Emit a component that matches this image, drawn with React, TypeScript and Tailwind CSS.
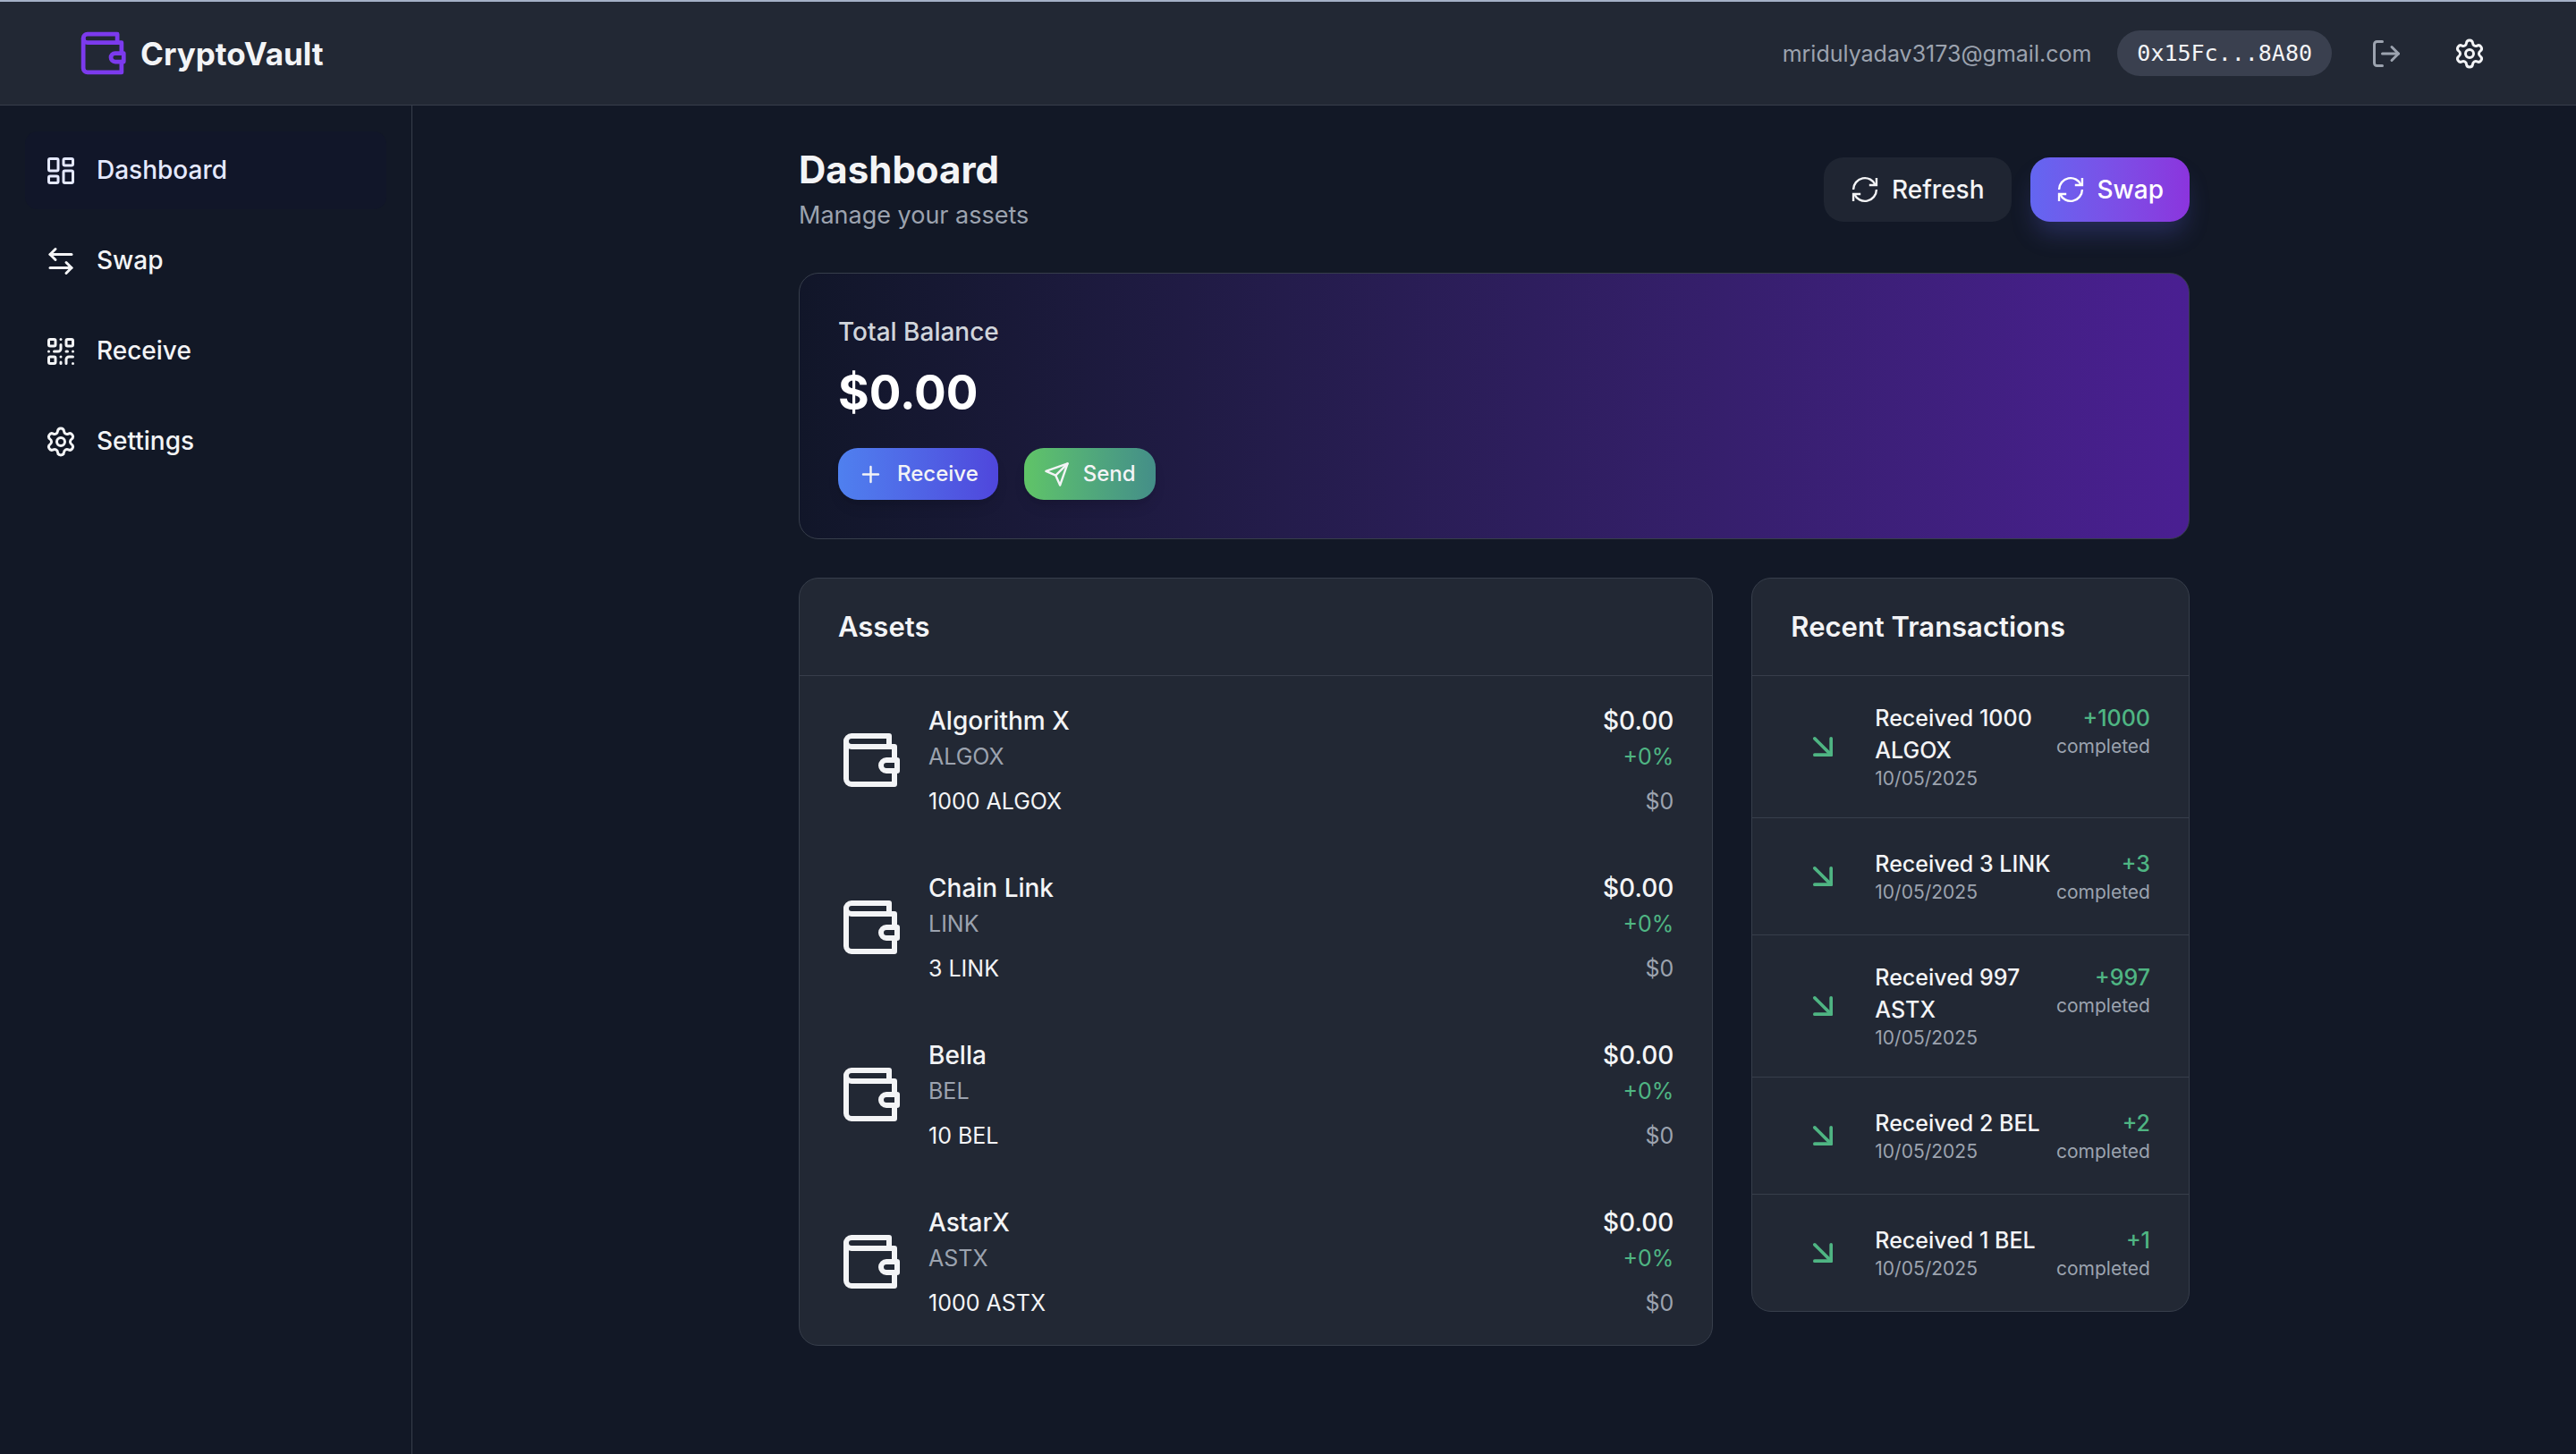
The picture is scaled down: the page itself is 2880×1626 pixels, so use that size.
import type { ReactNode } from "react";
import { ArrowDownRight, ArrowLeftRight, LayoutDashboard, LogOut, Plus, QrCode, Settings } from "lucide-react";

type IconProps = { className?: string };

function Stroke({ className, children }: IconProps & { children: ReactNode }) {
  return (
    <svg
      viewBox="0 0 24 24"
      fill="none"
      stroke="currentColor"
      strokeWidth={2}
      strokeLinecap="round"
      strokeLinejoin="round"
      className={className}
      aria-hidden="true"
    >
      {children}
    </svg>
  );
}

function WalletIcon({ className }: IconProps) {
  return (
    <Stroke className={className}>
      <path d="M21 12V7H5a2 2 0 0 1 0-4h14v4" />
      <path d="M3 5v14a2 2 0 0 0 2 2h16v-5" />
      <path d="M18 12a2 2 0 0 0 0 4h4v-4Z" />
    </Stroke>
  );
}

function SendIcon({ className }: IconProps) {
  return (
    <Stroke className={className}>
      <path d="m22 2-7 20-4-9-9-4Z" />
      <path d="M22 2 11 13" />
    </Stroke>
  );
}

function RefreshIcon({ className }: IconProps) {
  return (
    <svg viewBox="0 0 24 24" fill="none" stroke="currentColor" strokeWidth={1.8} className={className} aria-hidden="true">
      <path d="M2.3 12A9.7 9.7 0 0 1 20.9 8.2" />
      <path d="M21.7 2.2v6H15.6" />
      <path d="M21.7 12A9.7 9.7 0 0 1 3.1 15.8" />
      <path d="M2.3 21.8v-6H8.4" />
    </svg>
  );
}

const navItems = [
  { label: "Dashboard", Icon: LayoutDashboard, active: true },
  { label: "Swap", Icon: ArrowLeftRight, active: false },
  { label: "Receive", Icon: QrCode, active: false },
  { label: "Settings", Icon: Settings, active: false },
];

const assets = [
  { name: "Algorithm X", symbol: "ALGOX", amount: "1000" },
  { name: "Chain Link", symbol: "LINK", amount: "3" },
  { name: "Bella", symbol: "BEL", amount: "10" },
  { name: "AstarX", symbol: "ASTX", amount: "1000" },
];

const transactions = [
  { symbol: "ALGOX", amount: "1000" },
  { symbol: "LINK", amount: "3" },
  { symbol: "ASTX", amount: "997" },
  { symbol: "BEL", amount: "2" },
  { symbol: "BEL", amount: "1" },
];

function Header() {
  return (
    <header className="flex items-center justify-between border-t-2 border-b border-t-[#a5b1c7] border-b-[#373e4b] bg-[#222834] pr-[87px] pl-[86px] py-[29px]">
      <a href="#" className="flex items-center gap-[14px]">
        <WalletIcon className="size-[57px] text-[#7c3aed]" />
        <span className="text-[35px] leading-[50px] font-bold">CryptoVault</span>
      </a>
      <div className="flex items-center gap-[29px]">
        <span className="text-[25px] leading-[36px] text-[#9ca3af]">mridulyadav3173@gmail.com</span>
        <button
          type="button"
          className="rounded-full bg-[#3a404f] px-[22px] py-[7px] font-['DejaVu_Sans_Mono',monospace] text-[25px] leading-[37px]"
        >
          0x15Fc...8A80
        </button>
        <button type="button" aria-label="Log out" className="px-[14px] text-[#9ca3af]">
          <LogOut className="size-[36px]" />
        </button>
        <button type="button" aria-label="Settings" className="px-[14px]">
          <Settings className="size-[36px]" />
        </button>
      </div>
    </header>
  );
}

function Sidebar() {
  return (
    <aside className="w-[461px] shrink-0 border-r border-[#373e4b] px-[28px] py-[29px]">
      <nav className="flex flex-col gap-[14px]">
        {navItems.map(({ label, Icon, active }) => (
          <a
            key={label}
            href="#"
            className={
              active
                ? "flex items-center gap-[22px] rounded-[14px] bg-[#111629] p-[22px] text-[28px] leading-[43px] font-medium text-[#e5e9ff]"
                : "flex items-center gap-[22px] rounded-[14px] p-[22px] text-[28px] leading-[43px] font-medium"
            }
          >
            <Icon className="size-[36px]" />
            {label}
          </a>
        ))}
      </nav>
    </aside>
  );
}

function BalanceCard() {
  return (
    <section className="rounded-[22px] border border-[#373e4b] bg-linear-to-r from-[#111629] to-[#4a1f92] p-[43px]">
      <p className="text-[28px] leading-[44px] font-medium text-[#d1d5db]">Total Balance</p>
      <p className="mt-[14px] text-[53px] leading-[65px] font-bold text-white">$0.00</p>
      <div className="mt-[29px] flex gap-[29px]">
        <button
          type="button"
          className="flex items-center gap-[15px] rounded-[22px] bg-linear-to-r from-[#4f80ef] to-[#4f46dc] px-[22px] py-[11px] text-[24px] leading-[36px] font-medium shadow-lg"
        >
          <Plus className="size-[29px]" />
          Receive
        </button>
        <button
          type="button"
          className="flex items-center gap-[15px] rounded-[22px] bg-linear-to-r from-[#60c467] to-[#448e88] px-[22px] py-[11px] text-[24px] leading-[36px] font-medium shadow-lg"
        >
          <SendIcon className="size-[29px]" />
          Send
        </button>
      </div>
    </section>
  );
}

function Card({ title, className, children }: { title: string; className: string; children: ReactNode }) {
  return (
    <section className={className}>
      <h2 className="border-b border-[#373e4b] px-[43px] py-[29px] text-[31px] leading-[50px] font-semibold">{title}</h2>
      {children}
    </section>
  );
}

export default function App() {
  return (
    <div className="flex min-h-screen flex-col bg-[#121826] font-['Inter',sans-serif] text-[#f3f4f6]">
      <Header />
      <div className="flex flex-1">
        <Sidebar />
        <main className="flex-1 py-[43px]">
          <div className="mx-auto flex max-w-[1555px] flex-col gap-[43px]">
            <div className="flex items-center justify-between">
              <div>
                <h1 className="text-[42px] leading-[58px] font-bold">Dashboard</h1>
                <p className="text-[27px] leading-[43px] text-[#9ca3af]">Manage your assets</p>
              </div>
              <div className="flex gap-[21px]">
                <button
                  type="button"
                  className="flex items-center gap-[14px] rounded-[22px] bg-[#1f2532] px-[30px] py-[14px] text-[28px] leading-[44px] font-medium"
                >
                  <RefreshIcon className="size-[32px]" />
                  Refresh
                </button>
                <button
                  type="button"
                  className="flex items-center gap-[14px] rounded-[22px] bg-linear-to-r from-[#6366f1] to-[#8b34dd] px-[29px] py-[14px] text-[28px] leading-[44px] font-medium text-white shadow-[0_18px_27px_-5px_rgba(99,102,241,0.25)]"
                >
                  <RefreshIcon className="size-[32px]" />
                  Swap
                </button>
              </div>
            </div>
            <BalanceCard />
            <div className="grid grid-cols-3 items-start gap-[43px]">
              <Card title="Assets" className="col-span-2 rounded-[22px] border border-[#373e4b] bg-[#222834]">
                <ul>
                  {assets.map((a) => (
                    <li key={a.name} className="flex items-center gap-[29px] px-[43px] py-[29px]">
                      <WalletIcon className="size-[72px]" />
                      <div className="flex-1">
                        <div className="flex justify-between text-[28px] leading-[43px] font-medium">
                          <h3>{a.name}</h3>
                          <span>$0.00</span>
                        </div>
                        <div className="flex justify-between text-[25px] leading-[36px]">
                          <span className="text-[#9ca3af]">{a.symbol}</span>
                          <span className="text-[#4fb583]">+0%</span>
                        </div>
                        <div className="mt-[14px] flex justify-between text-[25px] leading-[36px]">
                          <span>
                            {a.amount} {a.symbol}
                          </span>
                          <span className="text-[#9ca3af]">$0</span>
                        </div>
                      </div>
                    </li>
                  ))}
                </ul>
              </Card>
              <Card title="Recent Transactions" className="rounded-[22px] border border-[#373e4b] bg-[#222834]">
                <ul className="divide-y divide-[#373e4b]">
                  {transactions.map((t) => (
                    <li key={t.symbol + t.amount} className="flex items-center gap-[22px] px-[43px] py-[29px]">
                      <span className="p-[14px] text-[#4fb583]">
                        <ArrowDownRight className="size-[44px]" />
                      </span>
                      <div className="flex flex-1 justify-between">
                        <div>
                          <p className="text-[25px] leading-[36px] font-medium">
                            Received {t.amount} {t.symbol}
                          </p>
                          <p className="text-[21px] leading-[28px] text-[#9ca3af]">10/05/2025</p>
                        </div>
                        <div className="text-right">
                          <p className="text-[25px] leading-[36px] font-medium text-[#4fb583]">+{t.amount}</p>
                          <p className="text-[21px] leading-[28px] text-[#9ca3af]">completed</p>
                        </div>
                      </div>
                    </li>
                  ))}
                </ul>
              </Card>
            </div>
          </div>
        </main>
      </div>
    </div>
  );
}
